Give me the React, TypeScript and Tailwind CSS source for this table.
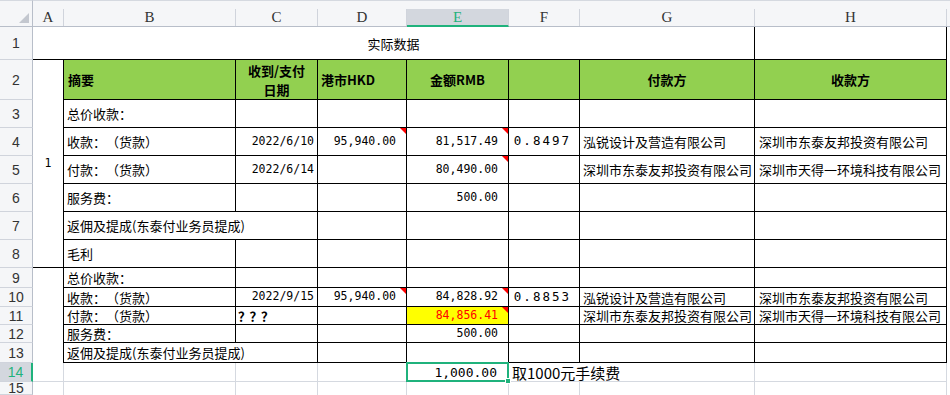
import React from "react";

const cjk = "font-['Noto_Sans_CJK_SC',sans-serif] [text-spacing-trim:space-all]";
const mono = "font-['DejaVu_Sans_Mono',monospace]";
const BK = "border-r border-b border-black";
const LT = "border-r border-b border-[#d5d9e0]";
const LR = "border-r border-[#d5d9e0]";
const GREEN = "bg-[#92d050]";

function Tri() {
  return (
    <span className="absolute right-0 top-0 w-[6px] h-[6px] bg-[#ff0000] [clip-path:polygon(0_0,100%_0,100%_100%)]" />
  );
}

function Cell({ className = "", children }: { className?: string; children?: React.ReactNode }) {
  return (
    <div className={`relative flex items-center whitespace-nowrap text-black ${className}`}>{children}</div>
  );
}

function RowHead({ n, active = false }: { n: number; active?: boolean }) {
  return active ? (
    <div className="flex items-center justify-center bg-[#d3d7de] border-r-2 border-r-[#1fb27c] border-b border-b-[#d0d4dc] text-[#1fb27c] font-['Liberation_Sans',sans-serif] text-[14px] leading-none">
      {n}
    </div>
  ) : (
    <div className="flex items-center justify-center bg-[#f5f6f8] border-r border-r-[#b8bec9] border-b border-b-[#d0d4dc] text-[#333] font-['Liberation_Sans',sans-serif] text-[14px] leading-none">
      {n}
    </div>
  );
}

function ColHead({ l, active = false }: { l: string; active?: boolean }) {
  return active ? (
    <div className="flex flex-col bg-[#f5f6f8] border-t border-t-[#d5d9e0]">
      <div className="h-[8px]" />
      <div className="flex-1 flex items-center justify-center bg-[#d3d7de] border-b-2 border-b-[#1fb27c] border-r border-r-[#d0d4dc] text-[#1fb27c] font-['Liberation_Serif',serif] text-[15px] leading-none">
        {l}
      </div>
    </div>
  ) : (
    <div className="flex flex-col bg-[#f5f6f8] border-t border-t-[#d5d9e0] border-b border-b-[#b8bec9]">
      <div className="h-[8px]" />
      <div className="flex-1 flex items-center justify-center border-r border-r-[#d0d4dc] text-[#333] font-['Liberation_Serif',serif] text-[15px] leading-none">
        {l}
      </div>
    </div>
  );
}

const T = `${BK} ${cjk} text-[13px] leading-none pl-[3px]`;
const N = `${BK} ${mono} text-[11.5px] leading-none justify-end pr-[10px]`;
const D = `${BK} ${mono} text-[11.5px] leading-none justify-end pr-[3px]`;
const R = `${BK} ${mono} text-[12.5px] leading-none justify-end pr-[8px] tracking-[2px]`;
const G = `${BK} ${cjk} text-[13px] leading-none pl-[3px]`;
const H = `${BK} ${cjk} text-[13px] leading-none pl-[4px]`;
const HD = `${BK} ${GREEN} ${cjk} text-[13px] font-bold`;

function EmptyRow({ n, first }: { n: number; first: string }) {
  return (
    <>
      <RowHead n={n} />
      <Cell className={T}>{first}</Cell>
      <Cell className={BK} />
      <Cell className={BK} />
      <Cell className={BK} />
      <Cell className={BK} />
      <Cell className={BK} />
      <Cell className={BK} />
      <div />
    </>
  );
}

export default function App() {
  return (
    <div className="w-[950px] h-[395px] overflow-hidden bg-white">
      <div className="grid grid-cols-[33px_31px_172px_82px_89px_102px_71px_175px_192px_3px] grid-rows-[27px_33px_40px_28px_28px_28px_28px_28px_28px_20px_19px_18px_18px_20px_19px_13px]">
        {/* column header */}
        <div className="relative bg-[#f5f6f8] border-t border-t-[#d5d9e0] border-r border-r-[#b8bec9] border-b border-b-[#b8bec9]">
          <span className="absolute right-[3px] bottom-[3px] w-[10px] h-[10px] bg-[#c3c7cf] [clip-path:polygon(100%_0,100%_100%,0_100%)]" />
        </div>
        <ColHead l="A" />
        <ColHead l="B" />
        <ColHead l="C" />
        <ColHead l="D" />
        <ColHead l="E" active />
        <ColHead l="F" />
        <ColHead l="G" />
        <ColHead l="H" />
        <div className="bg-[#f5f6f8] border-t border-t-[#d5d9e0] border-b border-b-[#b8bec9]" />

        {/* row 1 */}
        <RowHead n={1} />
        <Cell className={`col-span-7 ${BK} ${cjk} text-[13px] leading-none justify-center`}>实际数据</Cell>
        <Cell className={BK} />
        <div />

        {/* row 2 */}
        <RowHead n={2} />
        <Cell className={`row-span-7 ${BK} ${mono} text-[11.5px] leading-none justify-center`}>1</Cell>
        <Cell className={`${HD} leading-none pl-[4px]`}>摘要</Cell>
        <Cell className={`${HD} justify-center`}>
          <div className="flex flex-col items-center leading-[19px]">
            <span>收到/支付</span>
            <span>日期</span>
          </div>
        </Cell>
        <Cell className={`${HD} leading-none pl-[3px]`}>港市HKD</Cell>
        <Cell className={`${HD} leading-none justify-center`}>金额RMB</Cell>
        <Cell className={`${BK} ${GREEN}`} />
        <Cell className={`${HD} leading-none justify-center`}>付款方</Cell>
        <Cell className={`${HD} leading-none justify-center`}>收款方</Cell>
        <div />

        {/* row 3 */}
        <EmptyRow n={3} first="总价收款：" />

        {/* row 4 */}
        <RowHead n={4} />
        <Cell className={T}>收款：（货款）</Cell>
        <Cell className={D}>2022/6/10</Cell>
        <Cell className={N}>
          95,940.00
          <Tri />
        </Cell>
        <Cell className={N}>
          81,517.49
          <Tri />
        </Cell>
        <Cell className={R}>0.8497</Cell>
        <Cell className={G}>泓锐设计及营造有限公司</Cell>
        <Cell className={H}>深圳市东泰友邦投资有限公司</Cell>
        <div />

        {/* row 5 */}
        <RowHead n={5} />
        <Cell className={T}>付款：（货款）</Cell>
        <Cell className={D}>2022/6/14</Cell>
        <Cell className={BK} />
        <Cell className={N}>
          80,490.00
          <Tri />
        </Cell>
        <Cell className={BK} />
        <Cell className={G}>深圳市东泰友邦投资有限公司</Cell>
        <Cell className={H}>深圳市天得一环境科技有限公司</Cell>
        <div />

        {/* row 6 */}
        <RowHead n={6} />
        <Cell className={T}>服务费：</Cell>
        <Cell className={BK} />
        <Cell className={BK} />
        <Cell className={N}>500.00</Cell>
        <Cell className={BK} />
        <Cell className={BK} />
        <Cell className={BK} />
        <div />

        {/* row 7 */}
        <RowHead n={7} />
        <Cell className={`col-span-2 ${T}`}>返佣及提成(东泰付业务员提成)</Cell>
        <Cell className={BK} />
        <Cell className={BK} />
        <Cell className={BK} />
        <Cell className={BK} />
        <Cell className={BK} />
        <div />

        {/* row 8 */}
        <EmptyRow n={8} first="毛利" />

        {/* row 9 */}
        <RowHead n={9} />
        <Cell className="row-span-5 border-r border-black" />
        <Cell className={T}>总价收款：</Cell>
        <Cell className={BK} />
        <Cell className={BK} />
        <Cell className={BK} />
        <Cell className={BK} />
        <Cell className={BK} />
        <Cell className={BK} />
        <div />

        {/* row 10 */}
        <RowHead n={10} />
        <Cell className={T}>收款：（货款）</Cell>
        <Cell className={D}>2022/9/15</Cell>
        <Cell className={N}>
          95,940.00
          <Tri />
        </Cell>
        <Cell className={N}>
          84,828.92
          <Tri />
        </Cell>
        <Cell className={R}>0.8853</Cell>
        <Cell className={G}>泓锐设计及营造有限公司</Cell>
        <Cell className={H}>深圳市东泰友邦投资有限公司</Cell>
        <div />

        {/* row 11 */}
        <RowHead n={11} />
        <Cell className={T}>付款：（货款）</Cell>
        <Cell className={`${BK} ${cjk} text-[13px] font-bold leading-none pl-[2px] tracking-[-1.5px]`}>？？？</Cell>
        <Cell className={BK} />
        <Cell className={`${N} bg-[#ffff00]`}>
          <span className="text-[#ff0000]">84,856.41</span>
          <Tri />
        </Cell>
        <Cell className={BK} />
        <Cell className={G}>深圳市东泰友邦投资有限公司</Cell>
        <Cell className={H}>深圳市天得一环境科技有限公司</Cell>
        <div />

        {/* row 12 */}
        <RowHead n={12} />
        <Cell className={T}>服务费：</Cell>
        <Cell className={BK} />
        <Cell className={BK} />
        <Cell className={N}>500.00</Cell>
        <Cell className={BK} />
        <Cell className={BK} />
        <Cell className={BK} />
        <div />

        {/* row 13 */}
        <RowHead n={13} />
        <Cell className={`col-span-2 ${T}`}>返佣及提成(东泰付业务员提成)</Cell>
        <Cell className={BK} />
        <Cell className={BK} />
        <Cell className={BK} />
        <Cell className={BK} />
        <Cell className={BK} />
        <div />

        {/* row 14 */}
        <RowHead n={14} active />
        <Cell className={LT} />
        <Cell className={LT} />
        <Cell className={LT} />
        <Cell className={LT} />
        <Cell className={`${LT} ${mono} text-[13px] leading-none justify-end pr-[11px]`}>
          1,000.00
          <span className="absolute -left-[1px] -top-[1px] -right-[1px] -bottom-[1px] border-2 border-[#1fb27c] z-10" />
          <span className="absolute -right-[3px] -bottom-[3px] w-[6px] h-[6px] bg-[#1fb27c] border border-white z-20" />
        </Cell>
        <Cell className={`col-span-2 ${LT} ${cjk} text-[15px] leading-none pl-[3px]`}>取1000元手续费</Cell>
        <Cell className={LT} />
        <div />

        {/* row 15 */}
        <RowHead n={15} />
        <Cell className={LR} />
        <Cell className={LR} />
        <Cell className={LR} />
        <Cell className={LR} />
        <Cell className={LR} />
        <Cell className={LR} />
        <Cell className={LR} />
        <Cell className={LR} />
        <div />
      </div>
    </div>
  );
}
